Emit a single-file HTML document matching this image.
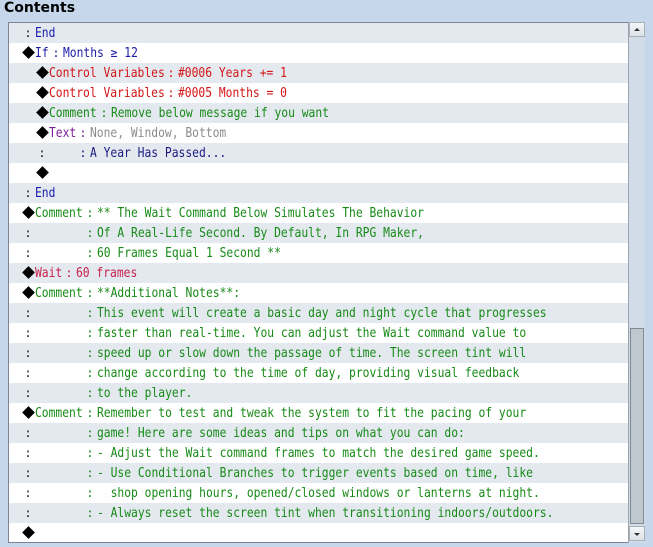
<!DOCTYPE html>
<html><head><meta charset="utf-8"><style>
body{margin:0;width:653px;height:547px;background:#c6d7eb;position:relative;overflow:hidden;font-family:"DejaVu Sans Mono","Liberation Mono",monospace;}
.title{position:absolute;left:4px;top:0px;font:bold 14px "DejaVu Sans","Liberation Sans",sans-serif;color:#000;}
.box{position:absolute;left:8px;top:22px;width:637px;height:521px;border:1px solid #7d8690;background:#fff;box-sizing:border-box;overflow:hidden;}
#rows{position:absolute;left:0;top:0;}
.row{position:absolute;left:0;width:621px;height:20px;font-size:13.4px;line-height:21px;white-space:pre;}
.row:nth-child(odd){background:#e3e9ef;}
.row span{position:absolute;top:0;transform:scaleX(0.845);transform-origin:0 0;}
.row span.c,.row span.d{transform:none;}
.c{width:14px;text-align:center;color:#222;font-size:12px;}
.d{width:14px;height:20px;}
.d::before{content:"";position:absolute;left:3px;top:5px;width:9px;height:9px;background:#000;transform:rotate(45deg);}
.b{color:#1c1ca8}.r{color:#d41414}.g{color:#178a17}.gr{color:#8c8c8c}.p{color:#7a1f9a}.n{color:#1a1a80}.w{color:#c8204a}
.sb{position:absolute;left:628px;top:22px;width:17px;height:521px;background:#d2dce8;border-left:1px solid #9aa4ae;box-sizing:border-box;}
.btn{position:absolute;left:0;width:16px;height:15px;background:linear-gradient(#f4f6f8,#dde2e8);border:1px solid #a8b0b8;box-sizing:border-box;}
.thumb{position:absolute;left:1px;top:306px;width:14px;height:196px;background:#bfc7cf;border:1px solid #7f8a95;box-sizing:border-box;}
</style></head><body>
<div class="title">Contents</div>
<div class="box">
<div id="rows">
<div class="row" style="top:0"><span class="c" style="left:12px">:</span><span class="b" style="left:26px">End</span></div>
<div class="row" style="top:20px"><span class="d" style="left:12px"></span><span class="b" style="left:26px">If</span><span class="c b" style="left:40px">:</span><span class="b" style="left:54px">Months ≥ 12</span></div>
<div class="row" style="top:40px"><span class="d" style="left:26px"></span><span class="r" style="left:40px">Control Variables</span><span class="c r" style="left:155px">:</span><span class="r" style="left:169px">#0006 Years += 1</span></div>
<div class="row" style="top:60px"><span class="d" style="left:26px"></span><span class="r" style="left:40px">Control Variables</span><span class="c r" style="left:155px">:</span><span class="r" style="left:169px">#0005 Months = 0</span></div>
<div class="row" style="top:80px"><span class="d" style="left:26px"></span><span class="g" style="left:40px">Comment</span><span class="c g" style="left:88px">:</span><span class="g" style="left:102px">Remove below message if you want</span></div>
<div class="row" style="top:100px"><span class="d" style="left:26px"></span><span class="p" style="left:40px">Text</span><span class="c p" style="left:67px">:</span><span class="gr" style="left:81px">None, Window, Bottom</span></div>
<div class="row" style="top:120px"><span class="c" style="left:26px">:</span><span class="c n" style="left:67px">:</span><span class="n" style="left:81px">A Year Has Passed...</span></div>
<div class="row" style="top:140px"><span class="d" style="left:26px"></span></div>
<div class="row" style="top:160px"><span class="c" style="left:12px">:</span><span class="b" style="left:26px">End</span></div>
<div class="row" style="top:180px"><span class="d" style="left:12px"></span><span class="g" style="left:26px">Comment</span><span class="c g" style="left:74px">:</span><span class="g" style="left:88px">** The Wait Command Below Simulates The Behavior</span></div>
<div class="row" style="top:200px"><span class="c" style="left:12px">:</span><span class="c g" style="left:74px">:</span><span class="g" style="left:88px">Of A Real-Life Second. By Default, In RPG Maker,</span></div>
<div class="row" style="top:220px"><span class="c" style="left:12px">:</span><span class="c g" style="left:74px">:</span><span class="g" style="left:88px">60 Frames Equal 1 Second **</span></div>
<div class="row" style="top:240px"><span class="d" style="left:12px"></span><span class="w" style="left:26px">Wait</span><span class="c w" style="left:53px">:</span><span class="w" style="left:67px">60 frames</span></div>
<div class="row" style="top:260px"><span class="d" style="left:12px"></span><span class="g" style="left:26px">Comment</span><span class="c g" style="left:74px">:</span><span class="g" style="left:88px">**Additional Notes**:</span></div>
<div class="row" style="top:280px"><span class="c" style="left:12px">:</span><span class="c g" style="left:74px">:</span><span class="g" style="left:88px">This event will create a basic day and night cycle that progresses</span></div>
<div class="row" style="top:300px"><span class="c" style="left:12px">:</span><span class="c g" style="left:74px">:</span><span class="g" style="left:88px">faster than real-time. You can adjust the Wait command value to</span></div>
<div class="row" style="top:320px"><span class="c" style="left:12px">:</span><span class="c g" style="left:74px">:</span><span class="g" style="left:88px">speed up or slow down the passage of time. The screen tint will</span></div>
<div class="row" style="top:340px"><span class="c" style="left:12px">:</span><span class="c g" style="left:74px">:</span><span class="g" style="left:88px">change according to the time of day, providing visual feedback</span></div>
<div class="row" style="top:360px"><span class="c" style="left:12px">:</span><span class="c g" style="left:74px">:</span><span class="g" style="left:88px">to the player.</span></div>
<div class="row" style="top:380px"><span class="d" style="left:12px"></span><span class="g" style="left:26px">Comment</span><span class="c g" style="left:74px">:</span><span class="g" style="left:88px">Remember to test and tweak the system to fit the pacing of your</span></div>
<div class="row" style="top:400px"><span class="c" style="left:12px">:</span><span class="c g" style="left:74px">:</span><span class="g" style="left:88px">game! Here are some ideas and tips on what you can do:</span></div>
<div class="row" style="top:420px"><span class="c" style="left:12px">:</span><span class="c g" style="left:74px">:</span><span class="g" style="left:88px">- Adjust the Wait command frames to match the desired game speed.</span></div>
<div class="row" style="top:440px"><span class="c" style="left:12px">:</span><span class="c g" style="left:74px">:</span><span class="g" style="left:88px">- Use Conditional Branches to trigger events based on time, like</span></div>
<div class="row" style="top:460px"><span class="c" style="left:12px">:</span><span class="c g" style="left:74px">:</span><span class="g" style="left:88px">  shop opening hours, opened/closed windows or lanterns at night.</span></div>
<div class="row" style="top:480px"><span class="c" style="left:12px">:</span><span class="c g" style="left:74px">:</span><span class="g" style="left:88px">- Always reset the screen tint when transitioning indoors/outdoors.</span></div>
<div class="row" style="top:500px"><span class="d" style="left:12px"></span></div>
</div>
</div>
<div class="sb">
<div class="btn" style="top:0"><svg width="14" height="13" style="position:absolute;left:0;top:0"><path d="M4 8h6L7 5z" fill="#333"/></svg></div>
<div class="thumb"></div>
<div class="btn" style="top:504px"><svg width="14" height="13" style="position:absolute;left:0;top:0"><path d="M4 6h6L7 9z" fill="#333"/></svg></div>
</div>
</body></html>
